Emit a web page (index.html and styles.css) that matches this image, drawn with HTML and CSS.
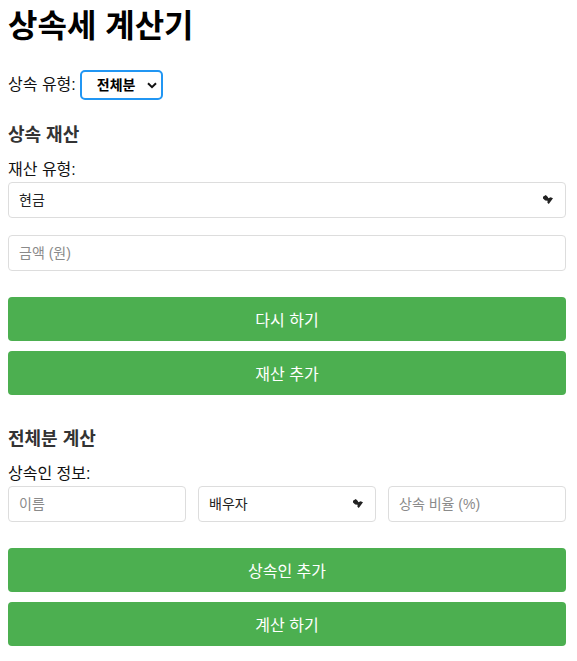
FILE: index.html
```html
<!DOCTYPE html>
<html lang="ko">
<head>
<meta charset="utf-8">
<title>상속세 계산기</title>
<link rel="stylesheet" href="styles.css">
</head>
<body>
<div class="app">
  <h1 class="title">상속세 계산기</h1>

  <div class="type-row">
    <label class="type-label">상속 유형:</label>
    <div class="select-wrap type-select-wrap">
      <select class="type-select"><option>전체분</option></select>
      <svg class="chev" width="10" height="7" viewBox="0 0 10 7"><path d="M1 1.2 L5 5.2 L9 1.2" fill="none" stroke="#111" stroke-width="2"/></svg>
    </div>
  </div>

  <h3 class="section-title first">상속 재산</h3>
  <label class="field-label">재산 유형:</label>
  <div class="select-wrap">
    <select class="field"><option>현금</option></select>
    <svg class="blob" width="10" height="9" viewBox="0 0 10 9"><path d="M0 1.8 L2.8 0 L4.8 2 L5.4 3.2 L7.6 2.2 L10 3.2 L5.8 9 L4.4 7.8 L4.6 5.8 L2.2 5.4 L0 3.6 Z" fill="#222"/></svg>
  </div>
  <input class="field amount" type="text" placeholder="금액 (원)">

  <button class="btn btn-first">다시 하기</button>
  <button class="btn">재산 추가</button>

  <h3 class="section-title second">전체분 계산</h3>
  <label class="field-label">상속인 정보:</label>
  <div class="heir-row">
    <input class="field" type="text" placeholder="이름">
    <div class="select-wrap">
      <select class="field"><option>배우자</option></select>
      <svg class="blob" width="10" height="9" viewBox="0 0 10 9"><path d="M0 1.8 L2.8 0 L4.8 2 L5.4 3.2 L7.6 2.2 L10 3.2 L5.8 9 L4.4 7.8 L4.6 5.8 L2.2 5.4 L0 3.6 Z" fill="#222"/></svg>
    </div>
    <input class="field" type="text" placeholder="상속 비율 (%)">
  </div>

  <button class="btn btn-first">상속인 추가</button>
  <button class="btn">계산 하기</button>
</div>
</body>
</html>
```
FILE: styles.css
```css
* { box-sizing: border-box; }

body {
  margin: 8px;
  font-family: "Liberation Sans", "Noto Sans CJK KR", sans-serif;
  color: #111;
  background: #fff;
}

.app {
  width: 558px;
}

.title {
  font-size: 32px;
  line-height: 36px;
  margin: 0;
  font-weight: 700;
  color: #000;
}

.type-row {
  display: flex;
  align-items: center;
  gap: 4px;
  margin-top: 26px;
}

.type-label {
  font-size: 16px;
  line-height: 20px;
}

.select-wrap {
  position: relative;
}

.type-select-wrap {
  width: 83px;
}

.type-select {
  appearance: none;
  -webkit-appearance: none;
  width: 83px;
  height: 30px;
  border: 2px solid #2196f3;
  border-radius: 5px;
  background: #fff;
  font-family: inherit;
  font-size: 14px;
  font-weight: 700;
  color: #000;
  padding: 0 0 0 15px;
  outline: none;
}

.chev {
  position: absolute;
  right: 6px;
  top: 12px;
  pointer-events: none;
}

.section-title {
  font-size: 18px;
  line-height: 22px;
  font-weight: 700;
  color: #333;
  margin: 0;
}

.section-title.first { margin-top: 24px; }
.section-title.second { margin-top: 33px; }

.field-label {
  display: block;
  font-size: 16px;
  line-height: 20px;
  margin-top: 14px;
  margin-bottom: 2px;
}

.field {
  appearance: none;
  -webkit-appearance: none;
  display: block;
  width: 100%;
  height: 36px;
  border: 1px solid #ddd;
  border-radius: 4px;
  background: #fff;
  font-family: inherit;
  font-size: 14px;
  color: #222;
  padding: 0 10px;
  outline: none;
}

.field::placeholder {
  color: #8a8a8a;
}

.blob {
  position: absolute;
  right: 13px;
  top: 13px;
  pointer-events: none;
}

.amount {
  margin-top: 17px;
}

.heir-row {
  display: grid;
  grid-template-columns: 1fr 1fr 1fr;
  gap: 12px;
}

.btn {
  display: block;
  width: 100%;
  height: 44px;
  border: none;
  border-radius: 4px;
  background: #4caf50;
  color: #fff;
  font-family: inherit;
  font-size: 16px;
  margin-top: 10px;
  cursor: pointer;
}

.btn.btn-first {
  margin-top: 26px;
}
```
